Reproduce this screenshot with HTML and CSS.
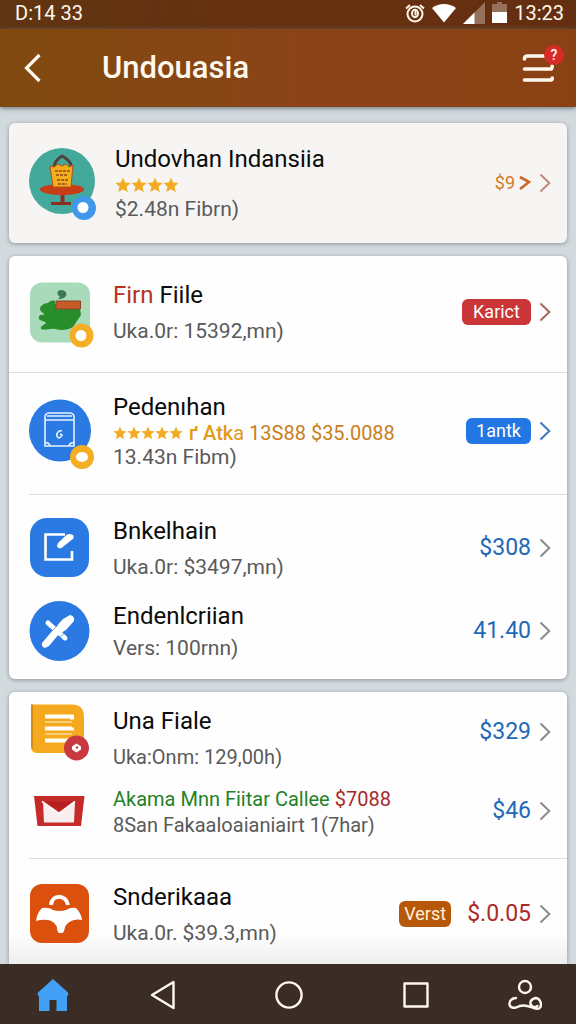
FILE: index.html
```html
<!DOCTYPE html>
<html lang="id">
<head>
<meta charset="utf-8">
<meta name="viewport" content="width=device-width, initial-scale=1">
<title>Undouasia</title>
<link rel="stylesheet" href="styles.css">
</head>
<body>
<svg class="defs" width="0" height="0" aria-hidden="true">
  <symbol id="chevron" viewBox="0 0 12 20"><path d="M1.500 1.500 L10.300 10 L1.500 18.500" fill="none" stroke="currentColor" stroke-width="2"/></symbol>
  <symbol id="star" viewBox="0 0 16 16"><path d="M8 .6l2.200 5 5.300.5-4 3.600 1.200 5.300L8 12.300 3.300 15l1.200-5.300-4-3.600 5.300-.5z" fill="currentColor"/></symbol>
</svg>

<div class="status">
  <span>D:14 33</span>
  <div class="status-icons">
    <svg width="20" height="22" viewBox="0 0 20 22"><g fill="none" stroke="#fff8ec" stroke-width="2"><circle cx="10" cy="12" r="7.500"/><path d="M1 6.500L5 3M19 6.500L15 3"/><ellipse cx="10" cy="11.500" rx="3" ry="3.800"/><path d="M10.500 8.500v5"/></g></svg>
    <svg width="24" height="20" viewBox="0 0 24 20"><path d="M0 5C7-.5 17-.5 24 5L12 19.500z" fill="#fff"/></svg>
    <svg width="22" height="22" viewBox="0 0 22 22"><path d="M22 0v22H0z" fill="#94705d"/><path d="M11.500 10.500V22H0z" fill="#fff"/></svg>
    <svg width="15" height="21" viewBox="0 0 15 21"><path d="M5 0h5v2h5v8H0V2h5z" fill="#94705d"/><path d="M0 10h15v11H0z" fill="#fff"/></svg>
    <span>13:23</span>
  </div>
</div>

<header class="header">
  <button class="icon-button" aria-label="Back"><svg width="18" height="30" viewBox="0 0 18 30"><path d="M15.500 2L2.500 15l13 13" fill="none" stroke="#fff8ec" stroke-width="3.200"/></svg></button>
  <h1 class="header-title">Undouasia</h1>
  <button class="icon-button menu" aria-label="Menu">
    <svg width="32" height="30" viewBox="0 0 32 30"><g fill="none" stroke="#fff8ec" stroke-width="3.600" stroke-linecap="round"><path d="M2.500 6q0-3 3-3H24M2.500 16H29q1.200 0 1.200-3M2.500 27H29q1.200 0 1.200-2"/></g></svg>
    <span class="menu-badge">?</span>
  </button>
</header>

<main class="main">
  <section class="card card--tinted">
    <a class="row row--featured" href="#">
      <svg class="icon" width="66" height="72" viewBox="28 147 66 72">
        <circle cx="61" cy="181" r="33" fill="#43aa9b"/>
        <path d="M53 167q1-7 8-11 8 4 10 11" fill="none" stroke="#54403a" stroke-width="3"/>
        <path d="M59.500 192h4v11h-4zM50 202h20v3H50z" fill="#8c2f22"/>
        <ellipse cx="61" cy="189.500" rx="22" ry="5.500" fill="#c63d17"/>
        <path d="M49 166l4 1 4-3 4 2 4-2 3 3 4-2-2 22H52z" fill="#f5ac1d" stroke="#b0501a" stroke-width="1"/>
        <path d="M54 171h15M55 175h12M56 180h11M57 184h9" stroke="#8d4a18" stroke-width="1.400" stroke-dasharray="3 1"/>
        <circle cx="83" cy="208" r="12" fill="#3f98ea"/><circle cx="82" cy="207.500" r="5.500" fill="#fff"/>
      </svg>
      <div class="text">
        <h2 class="title">Undovhan Indansiia</h2>
        <div class="stars"><svg class="star"><use href="#star"/></svg><svg class="star"><use href="#star"/></svg><svg class="star"><use href="#star"/></svg><svg class="star"><use href="#star"/></svg></div>
        <p class="sub">$2.48n Fibrn)</p>
      </div>
      <div class="aside aside--rose"><span class="offer">$9<svg width="12" height="16" viewBox="0 0 12 16"><path d="M1 2l9 5-9 7" fill="none" stroke="#cf6428" stroke-width="2.600"/></svg></span><svg class="chevron"><use href="#chevron"/></svg></div>
    </a>
  </section>

  <section class="card">
    <a class="row row--tall row--line" href="#">
      <svg class="icon" width="64" height="66" viewBox="29 279 64 66">
        <rect x="30" y="282.500" width="60" height="60" rx="12" fill="#a9dbbb"/>
        <path d="M55 301c-3-1-5 0-7 2-4 0-8 3-8 6s5 4 4 6c-4-1-6 1-5 4 1 2 6 2 7 4-2 2-6 3-5 6 5 2 9-1 14 0 6 2 13 1 18-2l8-12-1-6 1-5H55z" fill="#288d2b"/>
        <path d="M58 299l2-2c-4-3-3-7 1-7 5 0 7 4 4 7q-2 2-7 2z" fill="#3c7a55"/>
        <path d="M56 301h24.500v8H56z" fill="#c75a26" stroke="#8c4420" stroke-width="1"/>
        <circle cx="81.500" cy="335.500" r="12" fill="#f4ae23"/><circle cx="81" cy="335.500" r="5.500" fill="#fff"/>
      </svg>
      <div class="text text--spaced">
        <h2 class="title"><span class="red">Firn</span> Fiile</h2>
        <p class="sub">Uka.0r: 15392,mn)</p>
      </div>
      <div class="aside aside--brown"><span class="tag tag--red">Karict</span><svg class="chevron"><use href="#chevron"/></svg></div>
    </a>
    <a class="row row--tall row--rated row--line-inset" href="#">
      <svg class="icon" width="64" height="72" viewBox="29 395 64 72">
        <circle cx="60" cy="430.500" r="31" fill="#2b7ae4"/>
        <g fill="none" stroke="#e6f2ff" stroke-width="1.600"><path d="M45 420v-4q1-3 4-3h21q3 0 4 3v4M45 420v23q4-1 5 3h19q1-4 5-3v-23zM47 416h25M45 443v3h29v-3"/><path d="M62 431c-3-1-6 2-5 5s4 2 5-1l-2-1"/></g>
        <circle cx="82" cy="457" r="12" fill="#f4ae23"/><ellipse cx="82" cy="457" rx="6" ry="5" fill="#fff"/>
      </svg>
      <div class="text">
        <h2 class="title">Pedenıhan</h2>
        <div class="stars stars--tight"><svg class="star"><use href="#star"/></svg><svg class="star"><use href="#star"/></svg><svg class="star"><use href="#star"/></svg><svg class="star"><use href="#star"/></svg><svg class="star"><use href="#star"/></svg><span class="promo"><b>ґ Atk</b>a <span class="promo-price">13S88 $35.0088</span></span></div>
        <p class="sub">13.43n Fibm)</p>
      </div>
      <div class="aside aside--blue"><span class="tag tag--blue">1antk</span><svg class="chevron"><use href="#chevron"/></svg></div>
    </a>
    <a class="row row--upper" href="#">
      <svg class="icon" width="60" height="60" viewBox="29 516 60 60">
        <rect x="30" y="516" width="59" height="59" rx="17" fill="#2b7ae4"/>
        <path d="M65 532.500H45.500v25H72V549" fill="none" stroke="#fff" stroke-width="2.600"/>
        <path d="M58 541l9-8.500q4-1.500 6.500 1v3L61.500 546q-4 1-4.500-2z" fill="#fff"/>
      </svg>
      <div class="text text--spaced">
        <h2 class="title">Bnkelhain</h2>
        <p class="sub">Uka.0r: $3497,mn)</p>
      </div>
      <div class="aside"><span class="price">$308</span><svg class="chevron"><use href="#chevron"/></svg></div>
    </a>
    <a class="row row--lower" href="#">
      <svg class="icon" width="60" height="60" viewBox="29 601 60 60">
        <circle cx="59.500" cy="631" r="30" fill="#2b7ae4"/>
        <path d="M42 643l11-13 10-11 7-4q5 1 4 6l-8 9-7 4-10 12-4 2q-4-1-3-5z" fill="#fff"/>
        <path d="M48 623l17 15" stroke="#fff" stroke-width="5" stroke-linecap="round"/>
        <path d="M52 631l6-6M59 638l7-6" stroke="#2b7ae4" stroke-width=".7"/>
      </svg>
      <div class="text text--close">
        <h2 class="title">Endenlcriian</h2>
        <p class="sub">Vers: 100rnn)</p>
      </div>
      <div class="aside"><span class="price">41.40</span><svg class="chevron"><use href="#chevron"/></svg></div>
    </a>
  </section>

  <section class="card card--last">
    <a class="row row--top" href="#">
      <svg class="icon" width="60" height="58" viewBox="29 708 60 58">
        <path d="M31 705.500h41q12 0 12 13V748q0 6-7 6H38q-7 0-7-6z" fill="#f4a91f"/>
        <path d="M31 705.500h2V750q-2-1-2-4z" fill="#d28b13"/>
        <path d="M45 717.500h27v3M45 729.500h27v-1M45 741.500h25" fill="none" stroke="#fff" stroke-width="4"/><path d="M45 723h27M45 735h27" fill="none" stroke="#fff3d2" stroke-width="1"/>
        <circle cx="76.500" cy="749" r="12.500" fill="#c93840"/><path d="M76.500 744.500l4.500 3v3l-4.500 3-4.500-3v-3z" fill="#fff"/><circle cx="77" cy="748.500" r="1.200" fill="#c93840"/>
      </svg>
      <div class="text text--spaced">
        <h2 class="title">Una Fiale</h2>
        <p class="sub sub--small">Uka:Onm: 129,00h)</p>
      </div>
      <div class="aside"><span class="price">$329</span><svg class="chevron"><use href="#chevron"/></svg></div>
    </a>
    <a class="row row--mail row--line-inset" href="#">
      <svg class="icon" width="60" height="36" viewBox="29 796 60 36">
        <path d="M34 799h50.500l-3.500 30H37.500z" fill="#c52b28"/>
        <path d="M43 805l16 11 16-11-1 20.500H44z" fill="#f8eeee"/><path d="M45 804.500h28L59 813z" fill="#b5211f"/><path d="M42 804.500l17 12 16-12" fill="none" stroke="#fff" stroke-width="1.600"/>
      </svg>
      <div class="text">
        <h2 class="notice">Akama Mnn Fiitar Callee <span class="notice-price">$7088</span></h2>
        <p class="sub sub--small">8San Fakaaloaianiairt 1(7har)</p>
      </div>
      <div class="aside"><span class="price">$46</span><svg class="chevron"><use href="#chevron"/></svg></div>
    </a>
    <a class="row row--end" href="#">
      <svg class="icon" width="60" height="60" viewBox="29 883 60 60">
        <rect x="30" y="883" width="59" height="59" rx="12" fill="#dc500d"/>
        <path d="M51 904c1-11 15-11 17 0" fill="none" stroke="#fff" stroke-width="4"/>
        <path d="M36 920q1-8 6-13 7-1 11 2 7 2 13 0 5-3 10-2 5 5 6 12-4-1-8 0-7 2-9 7-1 6-3 6h-3q-2-1-2-6-3-6-9-7-6-1-12 1z" fill="#fff"/>
      </svg>
      <div class="text text--spaced">
        <h2 class="title">Snderikaaa</h2>
        <p class="sub">Uka.0r. $39.3,mn)</p>
      </div>
      <div class="aside"><span class="tag tag--amber">Verst</span><span class="price price--red">$.0.05</span><svg class="chevron"><use href="#chevron"/></svg></div>
    </a>
  </section>
</main>

<nav class="nav" aria-label="Navigation">
  <button class="nav-button" aria-label="Home"><svg width="34" height="34" viewBox="0 0 34 34"><path d="M17 1l15 13.500q1 2-.5 3.500H31v15H20.500V22h-7v11H3V18h-.500q-1.500-1.500-.5-3.500z" fill="#42a1f6"/></svg></button>
  <button class="nav-button nav-button--wide" aria-label="Previous"><svg width="26" height="30" viewBox="0 0 26 30"><path d="M23.500 2v26L2 15z" fill="none" stroke="#fff8f2" stroke-width="2.400" stroke-linejoin="round"/></svg></button>
  <button class="nav-button nav-button--wide" aria-label="Circle"><svg width="28" height="28" viewBox="0 0 28 28"><circle cx="14" cy="14" r="12.600" fill="none" stroke="#fff8f2" stroke-width="2.400"/></svg></button>
  <button class="nav-button nav-button--wide" aria-label="Recent"><svg width="26" height="26" viewBox="0 0 26 26"><path d="M1.500 1.500h23v23h-23z" fill="none" stroke="#fff8f2" stroke-width="2.400" stroke-linejoin="round"/></svg></button>
  <button class="nav-button" aria-label="Profile"><svg width="34" height="32" viewBox="0 0 34 32"><g fill="none" stroke="#fff8f2" stroke-width="2.400" stroke-linecap="round"><circle cx="17" cy="8" r="6"/><path d="M8 19c-4 0-7 3-6.500 6.500S6 29 8 28.500c6-3 10-2 15-.5 4 2 8 3 9.500 0 1.500-4-1-9-5-9-4 1-5.500 3-5 6 1 3 4 4 7 2"/></g></svg></button>
</nav>
</body>
</html>
```

FILE: styles.css
```css
* { box-sizing: border-box; }

body {
  display: flex;
  flex-direction: column;
  min-height: 100vh;
  margin: 0;
  background: #d3dadd;
  color: #0b0b0b;
  font-family: Roboto, "Liberation Sans", sans-serif;
}

h1, h2, p { margin: 0; font-weight: 400; }
button { padding: 0; border: 0; background: none; font: inherit; }
svg { display: block; flex: none; }
.defs { position: absolute; }

.status {
  display: flex;
  align-items: center;
  justify-content: space-between;
  height: 29px;
  padding: 0 12px 4px 15px;
  background: linear-gradient(90deg, #603512, #683011 50%, #632f10);
  color: #fff8ec;
  font-size: 20px;
  line-height: 24px;
}
.status-icons { display: flex; align-items: center; gap: 7px; }

.header {
  display: flex;
  align-items: center;
  height: 78px;
  padding: 0 22px 0 24px;
  background: linear-gradient(90deg, #804a0f, #8a4417 50%, #8a4214);
  box-shadow: 0 1px 5px #5d6a73;
  color: #fff8ec;
}
.icon-button { display: block; color: inherit; }
.header-title {
  flex: 1;
  margin-left: 60px;
  font-size: 31px;
  font-weight: 500;
  line-height: 36px;
}
.menu { position: relative; }
.menu-badge {
  position: absolute;
  top: -8px;
  right: -10px;
  width: 20px;
  height: 20px;
  border-radius: 50%;
  background: #d82b28;
  color: #fff;
  font-size: 14px;
  font-weight: 500;
  line-height: 20px;
  text-align: center;
}

.main {
  display: flex;
  flex: 1;
  flex-direction: column;
  gap: 13px;
  padding: 16px 9px 0;
}
.card {
  border-radius: 6px;
  background: #fefefe;
  box-shadow: 0 1px 4px #86919a;
}
.card--tinted { background: #f6f5f4; }
.card--last {
  flex: 1;
  border-radius: 6px 6px 0 0;
  background: linear-gradient(0deg, #efefef, #fefefe 30px);
}

.row {
  position: relative;
  display: grid;
  grid-template-columns: 60px 1fr auto;
  align-items: center;
  column-gap: 24px;
  padding: 0 16px 0 20px;
  color: inherit;
  text-decoration: none;
}
.row--featured { grid-template-columns: 66px 1fr auto; column-gap: 20px; min-height: 120px; }
.row--tall { min-height: 117px; padding-bottom: 4px; }
.row--rated { min-height: 122px; padding-bottom: 6px; }
.row--line { border-bottom: 1px solid #dcdddf; }
.row--line-inset::after {
  position: absolute;
  right: 0;
  bottom: 0;
  left: 20px;
  height: 1px;
  background: #dcdddf;
  content: "";
}
.row--upper { padding-top: 22px; padding-bottom: 10px; }
.row--lower { padding-top: 12px; padding-bottom: 18px; }
.row--top { align-items: start; padding-top: 15px; }
.row--top .aside { min-height: 50px; }
.row--mail { padding-top: 16px; padding-bottom: 22px; }
.row--end { padding-top: 24px; padding-bottom: 16px; }

.icon { overflow: visible; }
.text { min-width: 0; white-space: nowrap; }
.title { font-size: 24px; line-height: 28px; }
.sub { color: #5a5a5a; font-size: 21px; line-height: 24px; }
.sub--small { font-size: 20px; }
.text--spaced .sub { margin-top: 10px; }
.text--close .sub { margin-top: 6px; }
.red { color: #b8321f; }

.stars { display: flex; align-items: center; height: 24px; color: #f2ab22; }
.star { width: 16px; height: 16px; }
.stars--tight .star { width: 14px; height: 14px; }
.promo { margin-left: 6px; color: #e29a1b; font-size: 20px; line-height: 24px; }
.promo b { font-weight: 500; }
.promo-price { color: #c87f1c; }

.notice { color: #1f8226; font-size: 20px; line-height: 28px; }
.notice-price { color: #a82828; }

.aside { display: flex; align-items: center; gap: 8px; color: #8b8b8b; }
.aside--rose { color: #c08a78; }
.aside--brown { color: #a2685a; }
.aside--blue { color: #3f77c0; }
.chevron { width: 12px; height: 20px; }
.price { color: #2268b8; font-size: 23px; line-height: 28px; }
.price--red { margin-left: 8px; color: #ad2929; }
.offer { display: flex; align-items: center; gap: 4px; color: #d57a26; font-size: 18px; line-height: 24px; }
.tag {
  border-radius: 6px;
  color: #fff;
  font-size: 18px;
  line-height: 26px;
  text-align: center;
}
.tag--red { width: 69px; background: #ca3538; }
.tag--blue { width: 65px; background: #2377e4; }
.tag--amber { width: 52px; background: #b65808; color: #fff0d8; }

.nav {
  position: sticky;
  bottom: 0;
  display: flex;
  align-items: center;
  justify-content: space-between;
  height: 60px;
  padding: 2px 34px 0 36px;
  background: #3b2c26;
}
.nav-button { display: grid; place-items: center; }
.nav-button--wide { width: 68px; }
```
